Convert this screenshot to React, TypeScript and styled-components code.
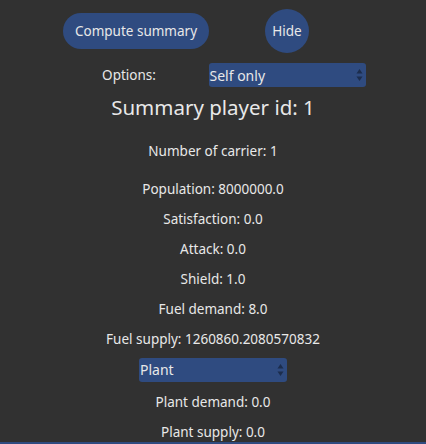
import React from "react";
import styled, { createGlobalStyle } from "styled-components";

const COLOR = {
  bg: "#313131",
  blue: "#2f4b80",
  arrow: "#1c2d4d",
  text: "#e8e8e8",
};

const GlobalStyle = createGlobalStyle`
  html, body {
    margin: 0;
    padding: 0;
    background: ${COLOR.bg};
  }
  body {
    font-family: "Noto Sans", "Open Sans", sans-serif;
    color: ${COLOR.text};
  }
`;

const Page = styled.div`
  width: 426px;
  height: 444px;
  overflow: hidden;
  display: flex;
  flex-direction: column;
  align-items: center;
  background: ${COLOR.bg};
`;

const TopGrid = styled.div`
  align-self: flex-start;
  margin: 9px 0 0 58px;
  display: grid;
  grid-template-columns: 156px 146px;
  row-gap: 10px;
  align-items: center;
  justify-items: center;
`;

const PillButton = styled.button<{ $round?: boolean }>`
  border: none;
  background: ${COLOR.blue};
  color: ${COLOR.text};
  font-family: inherit;
  font-size: 13.5px;
  padding: 0;
  width: ${p => (p.$round ? "44px" : "146px")};
  height: ${p => (p.$round ? "44px" : "36px")};
  border-radius: 22px;
`;

const Label = styled.span`
  font-size: 13.5px;
  margin-right: 14px;
`;

const SelectBox = styled.div<{ $width: number }>`
  width: ${p => p.$width}px;
  height: 24px;
  box-sizing: border-box;
  background: ${COLOR.blue};
  border-radius: 3px;
  display: flex;
  align-items: center;
  justify-content: space-between;
  padding: 0 3px 0 1px;
  font-size: 14px;
`;

const Title = styled.h1`
  margin: 5px 0 0;
  font-size: 20.5px;
  font-weight: 400;
  line-height: 30px;
`;

const Stat = styled.div<{ $top: number }>`
  margin-top: ${p => p.$top}px;
  font-size: 13.5px;
  line-height: 20px;
`;

const BottomBar = styled.div`
  margin-top: auto;
  width: 100%;
  height: 3px;
  background: ${COLOR.blue};
`;

function Arrows() {
  return (
    <svg width="7" height="14" viewBox="0 0 7 14">
      <path d="M3.5 1 L6.5 5.5 L0.5 5.5 Z" fill={COLOR.arrow} />
      <path d="M3.5 13 L6.5 8.5 L0.5 8.5 Z" fill={COLOR.arrow} />
    </svg>
  );
}

function Select({ value, width }: { value: string; width: number }) {
  return (
    <SelectBox $width={width}>
      <span>{value}</span>
      <Arrows />
    </SelectBox>
  );
}

const stats = [
  "Population: 8000000.0",
  "Satisfaction: 0.0",
  "Attack: 0.0",
  "Shield: 1.0",
  "Fuel demand: 8.0",
  "Fuel supply: 1260860.2080570832",
];

export default function App() {
  return (
    <>
      <GlobalStyle />
      <Page>
        <TopGrid>
          <PillButton>Compute summary</PillButton>
          <PillButton $round>Hide</PillButton>
          <Label>Options:</Label>
          <Select value="Self only" width={157} />
        </TopGrid>
        <Title>Summary player id: 1</Title>
        <Stat $top={19}>Number of carrier: 1</Stat>
        {stats.map((s, i) => (
          <Stat key={s} $top={i === 0 ? 18 : 10}>
            {s}
          </Stat>
        ))}
        <Stat $top={9}>
          <Select value="Plant" width={148} />
        </Stat>
        <Stat $top={10}>Plant demand: 0.0</Stat>
        <Stat $top={10}>Plant supply: 0.0</Stat>
        <BottomBar />
      </Page>
    </>
  );
}
